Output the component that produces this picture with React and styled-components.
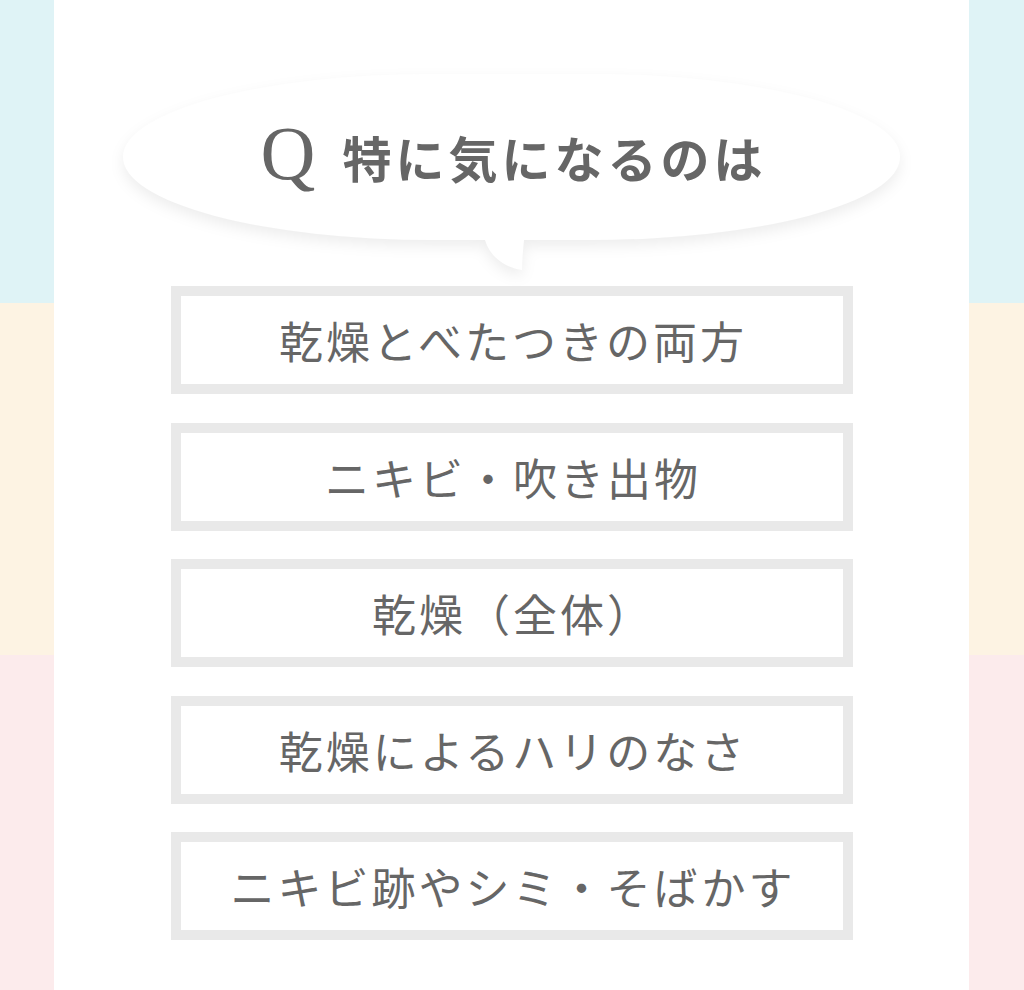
import React from "react";
import styled, { createGlobalStyle } from "styled-components";

const GlobalStyle = createGlobalStyle`
  html, body {
    margin: 0;
    padding: 0;
    height: 100%;
    background: #ffffff;
  }
  #root {
    min-height: 100vh;
  }
  * {
    box-sizing: border-box;
  }
`;

const Page = styled.div`
  display: flex;
  min-height: 100vh;
  background: #ffffff;
`;

const Stripe = styled.aside`
  display: flex;
  flex-direction: column;
  width: ${(p) => p.$width}px;
  flex-shrink: 0;
`;

const Band = styled.div`
  background: ${(p) => p.$color};
  height: ${(p) => (p.$height ? `${p.$height}px` : "auto")};
  flex: ${(p) => (p.$height ? "0 0 auto" : "1 1 auto")};
`;

const Main = styled.main`
  flex: 1;
  display: flex;
  flex-direction: column;
  align-items: center;
  padding-top: 74px;
  background: #ffffff;
`;

const BubbleWrap = styled.div`
  position: relative;
  width: 777px;
  height: 166px;
  filter: drop-shadow(0 6px 7px rgba(0, 0, 0, 0.07));
`;

const Bubble = styled.div`
  width: 100%;
  height: 100%;
  background: #ffffff;
  border-radius: 40% / 50%;
  display: flex;
  align-items: center;
  justify-content: center;
  padding-bottom: 2px;
  color: #666666;
`;

const Tail = styled.svg`
  position: absolute;
  left: 362px;
  top: 156px;
  width: 40px;
  height: 40px;
  overflow: visible;
`;

const QMark = styled.span`
  font-family: "Liberation Serif", "Times New Roman", serif;
  font-size: 76px;
  line-height: 1;
  margin-right: 27px;
  margin-top: -6px;
`;

const Heading = styled.h2`
  margin: 0;
  font-family: "Noto Sans CJK JP", "Noto Sans", sans-serif;
  font-weight: 700;
  font-size: 49px;
  letter-spacing: 4px;
  line-height: 1;
  margin-right: -4px;
`;

const Options = styled.ul`
  list-style: none;
  margin: 46px 0 0;
  padding: 0;
  display: flex;
  flex-direction: column;
  gap: 28.5px;
`;

const Option = styled.li`
  width: 682px;
  height: 108px;
  border: 10px solid #e9e9e9;
  background: #ffffff;
  display: flex;
  align-items: center;
  justify-content: center;
  font-family: "Noto Sans CJK JP", "Noto Sans", sans-serif;
  font-weight: 400;
  font-size: 44px;
  letter-spacing: 3px;
  padding-left: 3px;
  color: #666666;
  cursor: pointer;
`;

const choices = [
  "乾燥とべたつきの両方",
  "ニキビ・吹き出物",
  "乾燥（全体）",
  "乾燥によるハリのなさ",
  "ニキビ跡やシミ・そばかす",
];

const bands = [
  { color: "#dff3f6", height: 303 },
  { color: "#fdf3e3", height: 352 },
  { color: "#fcebec" },
];

function SideStripe({ width }) {
  return (
    <Stripe $width={width}>
      {bands.map((b, i) => (
        <Band key={i} $color={b.color} $height={b.height} />
      ))}
    </Stripe>
  );
}

export default function App() {
  return (
    <>
      <GlobalStyle />
      <Page>
        <SideStripe width={54} />
        <Main>
          <BubbleWrap>
            <Bubble>
              <QMark>Q</QMark>
              <Heading>特に気になるのは</Heading>
            </Bubble>
            <Tail viewBox="0 0 40 40">
              <path
                d="M0 0 L40 0 L39 10 C38 20 37 30 37 40 C24 38 6 30 0 10 Z"
                fill="#ffffff"
              />
            </Tail>
          </BubbleWrap>
          <Options>
            {choices.map((c) => (
              <Option key={c}>{c}</Option>
            ))}
          </Options>
        </Main>
        <SideStripe width={55} />
      </Page>
    </>
  );
}
